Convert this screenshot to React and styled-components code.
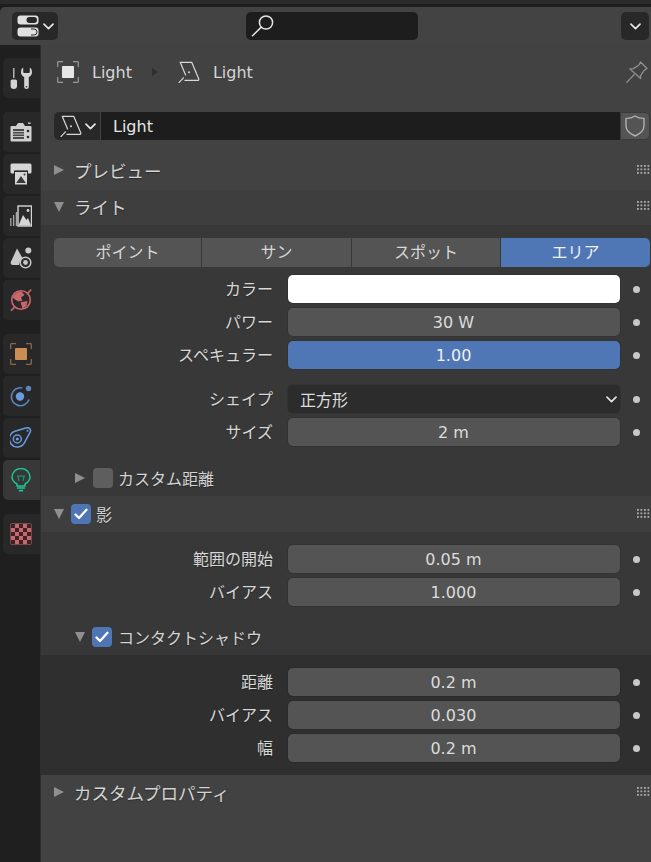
import React from "react";
import styled, { createGlobalStyle } from "styled-components";

const GlobalStyle = createGlobalStyle`
  html, body {
    margin: 0;
    padding: 0;
    background: #2a2a2a;
  }
  body {
    font-family: "DejaVu Sans", "Noto Sans CJK JP", sans-serif;
    font-size: 16px;
    color: #dcdcdc;
  }
`;

const LightIcon = () => (
  <svg width="22" height="22" viewBox="0 0 22 22" fill="none" stroke="#d8d8d8" strokeWidth="1.2" strokeLinecap="round" strokeLinejoin="round">
    <path d="M7.6 14 L2.2 1.3 H13.7 L20.8 18 Q21 19.4 19.6 19.4 H7" />
    <path d="M1 21.6 L2.8 19.6 M3.6 18.8 L5.4 16.8" />
    <circle cx="11" cy="11.2" r="1" fill="#d8d8d8" stroke="none" />
  </svg>
);

const ObjectIcon = () => (
  <svg width="22" height="22" viewBox="0 0 22 22" fill="none">
    <path d="M0.7 6 V1.5 Q0.7 0.7 1.5 0.7 H6 M16 0.7 H20.5 Q21.3 0.7 21.3 1.5 V6 M21.3 16 V20.5 Q21.3 21.3 20.5 21.3 H16 M6 21.3 H1.5 Q0.7 21.3 0.7 20.5 V16" stroke="#9a9a9a" strokeWidth="1.2" />
    <rect x="5" y="5" width="12" height="12" rx="0.8" fill="#e6e6e6" />
  </svg>
);

const Chevron = ({ color = "#e6e6e6" }) => (
  <svg width="11" height="7" viewBox="0 0 11 7" fill="none" stroke={color} strokeWidth="1.7" strokeLinecap="round" strokeLinejoin="round">
    <path d="M1 1.2 L5.5 5.6 L10 1.2" />
  </svg>
);

const EditorIcon = () => (
  <svg width="22" height="22" viewBox="0 0 22 22">
    <rect x="0.5" y="0.5" width="21" height="9" rx="3" fill="#e0e0e0" />
    <rect x="9.5" y="2" width="10.5" height="6" rx="3" fill="#282828" />
    <rect x="0.5" y="12.5" width="21" height="9" rx="3" fill="#e0e0e0" />
    <path d="M14 14 H17 Q20 14 20 17 Q20 20 17 20 H14" fill="#e0e0e0" stroke="#282828" strokeWidth="1" />
  </svg>
);

const SearchIcon = () => (
  <svg width="24" height="24" viewBox="0 0 24 24" fill="none" stroke="#e6e6e6" strokeWidth="1.5" strokeLinecap="round">
    <circle cx="15" cy="8.5" r="6.6" />
    <path d="M10 13.4 L1.5 21.8" />
  </svg>
);

const PinIcon = () => (
  <svg width="22" height="22" viewBox="0 0 22 22" fill="none" stroke="#8f8f8f" strokeWidth="1.3" strokeLinecap="round" strokeLinejoin="round">
    <path d="M14.5 1 L21 7.5 L18 9.5 L14.5 14.8 L14.6 17.6 L4 8 L7.4 7.6 L13 4 Z" />
    <path d="M0.8 21.4 L8 13.8" />
  </svg>
);

const ShieldIcon = () => (
  <svg width="20" height="22" viewBox="0 0 20 22" fill="none" stroke="#b0b0b0" strokeWidth="1.4" strokeLinejoin="round">
    <path d="M10 1 Q14 3.6 19 3.4 V11 Q19 17 10 21 Q1 17 1 11 V3.4 Q6 3.6 10 1 Z" />
  </svg>
);

const ToolIcon = () => (
  <svg width="22" height="22" viewBox="0 0 22 22" fill="#d4d4d4">
    <rect x="3.2" y="1" width="1.2" height="10" />
    <path d="M0.6 14 Q0.6 12.4 2.2 12.4 H5.4 Q7 12.4 7 14 V19 Q7 22 3.8 22 Q0.6 22 0.6 19 Z" />
    <path d="M13.2 0.6 Q11 1.6 11 5 Q11 8.6 14.2 10 V20 Q14.2 22 16.5 22 Q18.8 22 18.8 20 V10 Q22 8.6 22 5 Q22 1.6 19.8 0.6 V5 Q19.8 6 18.8 6 H14.2 Q13.2 6 13.2 5 Z" />
    <circle cx="16.5" cy="19.8" r="0.8" fill="#282828" />
  </svg>
);

const RenderIcon = () => (
  <svg width="22" height="20" viewBox="0 0 22 20">
    <path d="M1.5 4 H6 L8 1 H13 L15 4 H20.5 Q21.5 4 21.5 5 V18.5 Q21.5 19.5 20.5 19.5 H1.5 Q0.5 19.5 0.5 18.5 V5 Q0.5 4 1.5 4 Z" fill="#d0d0d0" />
    <rect x="18" y="0.5" width="2.6" height="1.4" fill="#d0d0d0" />
    <rect x="3" y="7" width="11" height="10" fill="#4a4a4a" />
    <path d="M3 9.5 H14 M3 12 H14 M3 14.5 H14" stroke="#d0d0d0" strokeWidth="0.9" />
    <circle cx="18" cy="9" r="1.3" fill="#2a2a2a" />
    <circle cx="18" cy="15" r="1.3" fill="#2a2a2a" />
  </svg>
);

const OutputIcon = () => (
  <svg width="22" height="22" viewBox="0 0 22 22">
    <path d="M2 0.5 H20 Q21.5 0.5 21.5 2 V9 Q21.5 10.5 20 10.5 H18 V7.5 H4 V10.5 H2 Q0.5 10.5 0.5 9 V2 Q0.5 0.5 2 0.5 Z" fill="#d6d6d6" />
    <rect x="5" y="7.5" width="12" height="14" fill="#d6d6d6" />
    <rect x="5" y="7.5" width="12" height="1.5" fill="#2a2a2a" />
    <path d="M6.2 20 L11 13 L15.8 20 Z" fill="#3a3a3a" />
    <circle cx="14.5" cy="11.5" r="1" fill="#3a3a3a" />
  </svg>
);

const ViewLayerIcon = () => (
  <svg width="22" height="22" viewBox="0 0 22 22" fill="none">
    <path d="M0.8 21 V13 M3.6 21 V10 M6.4 21 V7" stroke="#a8a8a8" strokeWidth="1.3" />
    <rect x="8" y="1" width="13.5" height="20" fill="#2a2a2a" stroke="#d6d6d6" strokeWidth="1.4" />
    <path d="M8.5 20.5 L13 10 L16.5 15 L18 13 L21 20.5 Z" fill="#d6d6d6" />
    <circle cx="18" cy="5.5" r="1.4" fill="#d6d6d6" />
  </svg>
);

const SceneIcon = () => (
  <svg width="22" height="22" viewBox="0 0 22 22">
    <path d="M7 1.5 L12.5 11 Q9.6 13 9 18 H3 Q0.5 18 0.6 15.5 Z" fill="#c8c8c8" />
    <circle cx="18.3" cy="3.5" r="3" fill="#c8c8c8" />
    <circle cx="15.5" cy="15.5" r="5.3" fill="none" stroke="#c8c8c8" strokeWidth="1.5" />
    <circle cx="15.5" cy="15.5" r="2.4" fill="#c8c8c8" />
  </svg>
);

const WorldIcon = () => (
  <svg width="22" height="22" viewBox="0 0 22 22" fill="none">
    <circle cx="11" cy="11" r="9.3" stroke="#c9686c" strokeWidth="1.6" />
    <path d="M2.6 8.5 Q6 2.5 11.5 2.6 L14.5 6 L11 8.5 L12.5 11.5 L8.5 12.5 L5 10.5 Z" fill="#c9686c" />
    <path d="M10.5 13.2 L17.5 12 L16.5 17 L12.5 19.4 Z" fill="#c9686c" />
    <path d="M1.4 21.4 L4.6 18 M17.6 4.4 L20.8 1" stroke="#c9686c" strokeWidth="1.6" strokeLinecap="round" />
  </svg>
);

const ObjectTabIcon = () => (
  <svg width="22" height="22" viewBox="0 0 22 22" fill="none">
    <path d="M0.7 6 V1.5 Q0.7 0.7 1.5 0.7 H6 M16 0.7 H20.5 Q21.3 0.7 21.3 1.5 V6 M21.3 16 V20.5 Q21.3 21.3 20.5 21.3 H16 M6 21.3 H1.5 Q0.7 21.3 0.7 20.5 V16" stroke="#8c6748" strokeWidth="1.3" />
    <rect x="5" y="5" width="12" height="12" rx="0.8" fill="#cc8d55" />
  </svg>
);

const PhysicsIcon = () => (
  <svg width="22" height="22" viewBox="0 0 22 22" fill="none">
    <path d="M11.5 2.8 A9 9 0 1 0 18.8 15" stroke="#5c85c4" strokeWidth="1.6" strokeLinecap="round" />
    <circle cx="10" cy="11.5" r="4.2" fill="#6a9ae0" />
    <circle cx="18.5" cy="3.5" r="2.7" fill="#5c85c4" />
  </svg>
);

const ConstraintIcon = () => (
  <svg width="22" height="22" viewBox="0 0 22 22" fill="none">
    <path d="M4.98 4.31 L16.63 0.82 A3 3 0 0 1 20.14 5.14 L14.35 15.83 A8 8 0 1 1 4.98 4.31 Z" stroke="#6a9ae0" strokeWidth="1.5" strokeLinejoin="round" />
    <circle cx="7.3" cy="12" r="4" stroke="#6a9ae0" strokeWidth="1.5" />
    <circle cx="7.3" cy="12" r="1.6" fill="#6a9ae0" />
    <circle cx="17.5" cy="3.7" r="1" fill="#6a9ae0" />
  </svg>
);

const BulbIcon = () => (
  <svg width="20" height="24" viewBox="0 0 20 24" fill="none" stroke="#1cc796" strokeWidth="1.5" strokeLinejoin="round">
    <path d="M6 16 Q1 13 1 9 A9 8.4 0 0 1 19 9 Q19 13 14 16 V18 H6 Z" />
    <path d="M6 8.2 H14 M7 8.2 L8 13 M13 8.2 L12 13" strokeWidth="1.2" stroke="#12966f" />
    <path d="M6.5 20 H13.5 M8.5 22.6 H11.5" strokeWidth="1.6" strokeLinecap="round" />
  </svg>
);

const TextureIcon = () => {
  const cells = [];
  for (let y = 0; y < 5; y++) {
    for (let x = 0; x < 5; x++) {
      if ((x + y) % 2 === 0) {
        cells.push(<rect key={`${x}-${y}`} x={1 + x * 4} y={1 + y * 4} width="4" height="4" fill="#3a2427" />);
      }
    }
  }
  return (
    <svg width="22" height="22" viewBox="0 0 22 22">
      <rect x="0.5" y="0.5" width="21" height="21" rx="1" fill="#c9686c" />
      {cells}
    </svg>
  );
};

const Window = styled.div`
  width: 651px;
  height: 862px;
  overflow: hidden;
  display: flex;
  flex-direction: column;
  background: #1d1d1d;
`;

const TopStrip = styled.div`
  height: 4px;
  background: #2b2b2b;
  border-bottom: 3px solid #1d1d1d;
  flex: none;
`;

const Header = styled.div`
  height: 38px;
  flex: none;
  background: #434343;
  border-radius: 5px 0 0 0;
  display: grid;
  grid-template-columns: 234px 172px 1fr;
  align-items: start;
  padding: 5px 2px 0 12px;
  box-sizing: border-box;
`;

const HeaderButton = styled.div`
  width: ${(p) => p.$width}px;
  height: 28px;
  background: #282828;
  border-radius: 5px;
  display: flex;
  align-items: center;
  justify-content: center;
  gap: 4px;
  justify-self: ${(p) => (p.$end ? "end" : "start")};
`;

const SearchBox = styled.div`
  height: 28px;
  background: #1d1d1d;
  border-radius: 5px;
  padding: 2px 0 0 5px;
  box-sizing: border-box;
`;

const Body = styled.div`
  flex: 1;
  display: flex;
  min-height: 0;
`;

const Sidebar = styled.nav`
  width: 40px;
  flex: none;
  padding: 13px 0 0 3px;
  box-sizing: border-box;
  display: flex;
  flex-direction: column;
  gap: 14px;
  background: #1f1f1f;
`;

const TabGroup = styled.div`
  display: flex;
  flex-direction: column;
  gap: 2px;
`;

const SideTab = styled.div`
  height: 40px;
  background: ${(p) => (p.$active ? "#383838" : "#282828")};
  border-radius: 5px 0 0 5px;
  display: flex;
  align-items: center;
  justify-content: center;
  padding-right: 1px;
`;

const Main = styled.main`
  flex: 1;
  background: #424242;
  border-left: 1px solid #2e2e2e;
  display: flex;
  flex-direction: column;
  min-width: 0;
`;

const Breadcrumb = styled.div`
  height: 28px;
  margin: 13px 0 26px;
  padding: 0 3px 0 16px;
  display: flex;
  align-items: center;
`;

const CrumbText = styled.span`
  margin-left: 13px;
  color: #d6d6d6;
`;

const CrumbArrow = styled.span`
  width: 0;
  height: 0;
  margin: 0 20px;
  border-left: 6px solid #2f2f2f;
  border-top: 4px solid transparent;
  border-bottom: 4px solid transparent;
`;

const PinSlot = styled.div`
  margin-left: auto;
  display: flex;
`;

const DataRow = styled.div`
  height: 28px;
  margin: 0 1px 14px 13px;
  display: flex;
`;

const DataButton = styled.div`
  width: 40px;
  background: #282828;
  border-radius: 5px 0 0 5px;
  border-right: 1px solid #434343;
  display: flex;
  align-items: center;
  gap: 3px;
  padding-left: 6px;
`;

const DataInput = styled.div`
  flex: 1;
  background: #1d1d1d;
  color: #e6e6e6;
  padding-left: 12px;
  line-height: 29px;
`;

const ShieldButton = styled.div`
  width: 30px;
  background: #545454;
  border-radius: 0 5px 5px 0;
  box-sizing: border-box;
  border: 1px solid #3a3a3a;
  display: flex;
  align-items: center;
  justify-content: center;
`;

const PanelHeader = styled.div`
  height: ${(p) => p.$height || 36}px;
  flex: none;
  box-sizing: border-box;
  display: flex;
  align-items: center;
  background: ${(p) => p.$bg || "transparent"};
  padding-left: ${(p) => p.$indent}px;
  padding-bottom: ${(p) => p.$lift || 0}px;
`;

const Triangle = styled.span`
  width: 0;
  height: 0;
  flex: none;
  ${(p) =>
    p.$open
      ? `border-top: 10px solid #8f8f8f;
         border-left: 5.5px solid transparent;
         border-right: 5.5px solid transparent;`
      : `border-left: 10px solid #8f8f8f;
         border-top: 5.5px solid transparent;
         border-bottom: 5.5px solid transparent;`}
`;

const PanelTitle = styled.span`
  margin-left: ${(p) => p.$gap}px;
  font-size: ${(p) => p.$size || 16}px;
  color: #d4d4d4;
  text-shadow: 0 1px 1px rgba(0, 0, 0, 0.35);
  white-space: nowrap;
`;

const Grip = styled.span`
  margin-left: auto;
  margin-bottom: 2px;
  width: 14px;
  height: 9px;
  background-image: radial-gradient(circle at 1px 1px, #b0b0b0 0.9px, transparent 1.1px);
  background-size: 3.5px 3.5px;
`;

const CheckBox = styled.span`
  width: 20px;
  height: 20px;
  flex: none;
  margin-left: ${(p) => p.$gap}px;
  border-radius: 4px;
  background: ${(p) => (p.$on ? "#4f76b4" : "#5e5e5e")};
  display: flex;
  align-items: center;
  justify-content: center;
`;

const CheckMark = () => (
  <svg width="14" height="12" viewBox="0 0 14 12" fill="none" stroke="#ffffff" strokeWidth="2.3" strokeLinecap="round" strokeLinejoin="round">
    <path d="M1.5 6.5 L5 10 L12.5 1.8" />
  </svg>
);

const PanelBody = styled.div`
  background: ${(p) => p.$bg || "#383838"};
  padding: 13px 0 ${(p) => p.$bottom || 0}px;
  display: flex;
  flex-direction: column;
`;

const EnumTabs = styled.div`
  height: 28px;
  margin: 0 1px 9px 13px;
  display: grid;
  grid-template-columns: 147px 149px 148px 1fr;
  gap: 1px;
  background: #383838;
`;

const EnumTab = styled.div`
  background: ${(p) => (p.$active ? "#5077b5" : "#545454")};
  color: ${(p) => (p.$active ? "#f2f2f2" : "#d8d8d8")};
  text-align: center;
  line-height: 29px;
  &:first-child {
    border-radius: 5px 0 0 5px;
  }
  &:last-child {
    border-radius: 0 5px 5px 0;
  }
`;

const Rows = styled.div`
  display: flex;
  flex-direction: column;
  gap: 5px;
  margin-bottom: ${(p) => p.$after || 0}px;
`;

const Row = styled.div`
  display: grid;
  grid-template-columns: 232px 15px 332px 1fr;
  height: 28px;
  align-items: center;
`;

const Label = styled.span`
  grid-column: 1;
  text-align: right;
  color: #d8d8d8;
  text-shadow: 0 1px 1px rgba(0, 0, 0, 0.3);
  white-space: nowrap;
  padding-bottom: 2px;
`;

const fieldBackgrounds = {
  color: "#ffffff",
  blue: "#5077b5",
  menu: "#2c2c2c",
};

const Field = styled.div`
  grid-column: 3;
  height: 28px;
  box-sizing: border-box;
  border-radius: 5px;
  box-shadow: 0 0 0 1px rgba(0, 0, 0, 0.08);
  background: ${(p) => fieldBackgrounds[p.$kind] || "#545454"};
  color: ${(p) => (p.$kind === "blue" ? "#f0f0f0" : "#dcdcdc")};
  display: flex;
  align-items: center;
  justify-content: ${(p) => (p.$kind === "menu" ? "space-between" : "center")};
  padding: ${(p) => (p.$kind === "menu" ? "0 3px 0 12px" : "0 1px 0 0")};
`;

const Dot = styled.span`
  grid-column: 4;
  justify-self: start;
  margin-left: 13px;
  width: 7px;
  height: 7px;
  border-radius: 50%;
  background: #c8c8c8;
`;

const PropRow = ({ label, kind, value }) => (
  <Row>
    <Label>{label}</Label>
    <Field $kind={kind}>
      {value}
      {kind === "menu" && <Chevron color="#e0e0e0" />}
    </Field>
    <Dot />
  </Row>
);

const tools = [
  [<ToolIcon />],
  [<RenderIcon />, <OutputIcon />, <ViewLayerIcon />, <SceneIcon />, <WorldIcon />],
  [<ObjectTabIcon />, <PhysicsIcon />, <ConstraintIcon />, <BulbIcon />],
  [<TextureIcon />],
];

export default function App() {
  return (
    <Window>
      <GlobalStyle />
      <TopStrip />
      <Header>
        <HeaderButton $width={46}>
          <EditorIcon />
          <Chevron />
        </HeaderButton>
        <SearchBox>
          <SearchIcon />
        </SearchBox>
        <HeaderButton $width={28} $end>
          <Chevron />
        </HeaderButton>
      </Header>
      <Body>
        <Sidebar>
          {tools.map((group, i) => (
            <TabGroup key={i}>
              {group.map((icon, j) => (
                <SideTab key={j} $active={i === 2 && j === 3}>
                  {icon}
                </SideTab>
              ))}
            </TabGroup>
          ))}
        </Sidebar>
        <Main>
          <Breadcrumb>
            <ObjectIcon />
            <CrumbText>Light</CrumbText>
            <CrumbArrow />
            <LightIcon />
            <CrumbText>Light</CrumbText>
            <PinSlot>
              <PinIcon />
            </PinSlot>
          </Breadcrumb>
          <DataRow>
            <DataButton>
              <LightIcon />
              <Chevron />
            </DataButton>
            <DataInput>Light</DataInput>
            <ShieldButton>
              <ShieldIcon />
            </ShieldButton>
          </DataRow>

          <PanelHeader $indent={13} $lift={4}>
            <Triangle />
            <PanelTitle $gap={10} $size={17.5}>プレビュー</PanelTitle>
            <Grip />
          </PanelHeader>
          <PanelHeader $indent={13} $height={35} $lift={2} $bg="#3e3e3e">
            <Triangle $open />
            <PanelTitle $gap={10} $size={17.5}>ライト</PanelTitle>
            <Grip />
          </PanelHeader>
          <PanelBody>
            <EnumTabs>
              <EnumTab>ポイント</EnumTab>
              <EnumTab>サン</EnumTab>
              <EnumTab>スポット</EnumTab>
              <EnumTab $active>エリア</EnumTab>
            </EnumTabs>
            <Rows $after={16}>
              <PropRow label="カラー" kind="color" />
              <PropRow label="パワー" value="30 W" />
              <PropRow label="スペキュラー" kind="blue" value="1.00" />
            </Rows>
            <Rows $after={14}>
              <PropRow label="シェイプ" kind="menu" value="正方形" />
              <PropRow label="サイズ" value="2 m" />
            </Rows>
            <PanelHeader $indent={34}>
              <Triangle />
              <CheckBox $gap={8} />
              <PanelTitle $gap={5}>カスタム距離</PanelTitle>
            </PanelHeader>
          </PanelBody>

          <PanelHeader $indent={13} $bg="#3e3e3e">
            <Triangle $open />
            <CheckBox $gap={7} $on>
              <CheckMark />
            </CheckBox>
            <PanelTitle $gap={5}>影</PanelTitle>
            <Grip />
          </PanelHeader>
          <PanelBody>
            <Rows $after={13}>
              <PropRow label="範囲の開始" value="0.05 m" />
              <PropRow label="バイアス" value="1.000" />
            </Rows>
            <PanelHeader $indent={34}>
              <Triangle $open />
              <CheckBox $gap={7} $on>
                <CheckMark />
              </CheckBox>
              <PanelTitle $gap={6}>コンタクトシャドウ</PanelTitle>
            </PanelHeader>
          </PanelBody>
          <PanelBody $bg="#2f2f2f" $bottom={13}>
            <Rows>
              <PropRow label="距離" value="0.2 m" />
              <PropRow label="バイアス" value="0.030" />
              <PropRow label="幅" value="0.2 m" />
            </Rows>
          </PanelBody>

          <PanelHeader $indent={13} $lift={2}>
            <Triangle />
            <PanelTitle $gap={10} $size={17.5}>カスタムプロパティ</PanelTitle>
            <Grip />
          </PanelHeader>
        </Main>
      </Body>
    </Window>
  );
}
